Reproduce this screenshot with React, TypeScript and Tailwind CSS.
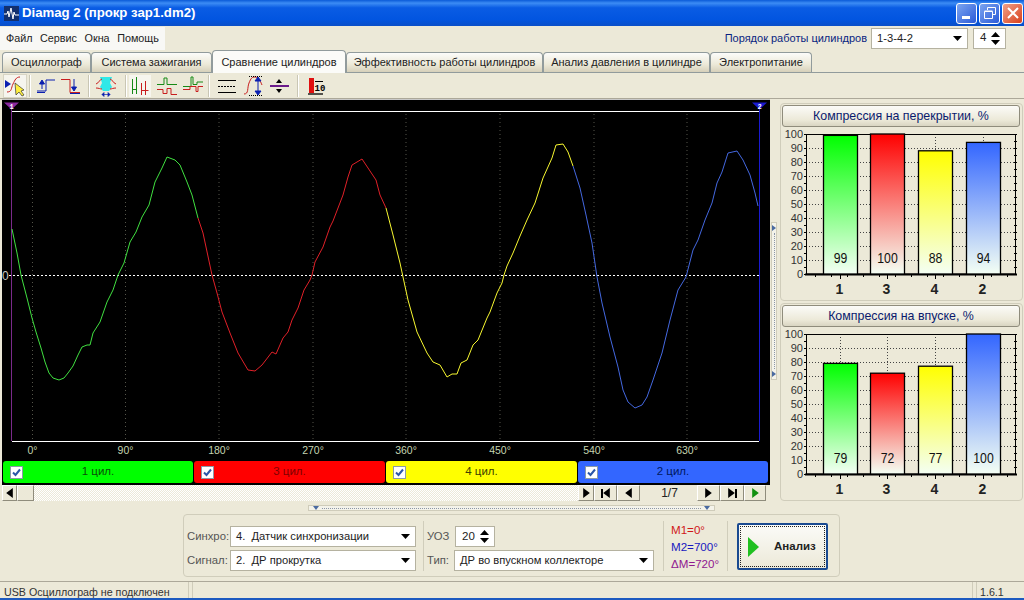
import React from 'react'

// Waveform traced from the oscillogram, split per cylinder
const GREEN = '12,229 17,253 21,275 27,298 32,318 36,332 41,348 45,362 49,373 53,378 59,380 64,378 68,373 73,366 78,355 82,347 87,345 90,345 93,333 100,322 107,302 113,290 118,275 124,263 130,242 136,232 142,217 149,205 155,182 162,168 167,157 175,160 180,165 187,182 192,195 198,218'
const RED = '198,218 203,233 212,275 217,293 222,312 230,333 238,353 248,370 255,371 262,365 272,352 276,354 283,338 288,332 292,320 298,308 304,290 310,280 312,275 315,262 323,247 330,227 333,221 343,195 348,177 352,165 357,162 362,159 368,168 376,180 380,195 386,208'
const YELLOW = '386,208 393,235 400,263 403,277 408,300 417,332 427,353 433,362 440,365 447,377 452,374 457,374 461,363 467,360 473,345 478,340 487,318 490,312 497,293 502,283 504,275 507,266 513,253 520,236 527,220 535,203 543,178 552,158 556,145 563,144 568,152 573,166'
const BLUE = '573,166 580,188 586,215 592,243 597,277 602,303 610,337 618,367 623,390 628,402 635,408 642,405 647,397 653,380 662,353 670,320 678,290 686,277 693,250 698,240 705,220 712,203 717,183 722,172 728,153 737,151 743,160 750,175 755,193 758,206'

const GRID_X = [32.5, 125.5, 219, 313, 406, 500, 594, 687]
const DEGREES = ['0°', '90°', '180°', '270°', '360°', '450°', '540°', '630°']

const TABS = [
  { label: 'Осциллограф', w: 'w-[89px]' },
  { label: 'Система зажигания', w: 'w-[121px]' },
  { label: 'Сравнение цилиндров', w: 'w-[134px]', active: true },
  { label: 'Эффективность работы цилиндров', w: 'w-[197px]' },
  { label: 'Анализ давления в цилиндре', w: 'w-[167px]' },
  { label: 'Электропитание', w: 'w-[102px]' },
]

const BAR_X = [823.5, 870.5, 918.5, 966.5]
const BAR_COLORS = ['#00ff00', '#ff0000', '#ffff00', '#3366ff']
const BAR_NAMES = ['1', '3', '4', '2']

const Caret = ({ className = '' }: { className?: string }) => (
  <svg width="9" height="5" viewBox="0 0 9 5" className={className}>
    <path d="M0 0h9L4.5 5z" fill="#000" />
  </svg>
)

const Combo = ({ text, w }: { text: string; w: string }) => (
  <div className={`${w} h-[21px] bg-white border border-[#b5b2a0] flex items-center justify-between pl-[5px] pr-[5px] text-[11.2px]`}>
    <span className="whitespace-pre">{text}</span>
    <Caret />
  </div>
)

const Spin = ({ value, w }: { value: string; w: string }) => (
  <div className={`${w} h-[21px] bg-white border border-[#b5b2a0] flex items-center justify-between pl-[6px] pr-[5px] text-[11.5px]`}>
    <span>{value}</span>
    <span className="flex flex-col gap-[3px]">
      <svg width="9" height="5" viewBox="0 0 9 5"><path d="M0 5h9L4.5 0z" fill="#000" /></svg>
      <Caret />
    </span>
  </div>
)

const Check = () => (
  <span className="w-[13px] h-[13px] bg-white border border-[#8a9aa8] flex items-center justify-center shrink-0">
    <svg width="9" height="9" viewBox="0 0 9 9">
      <path d="M1 4.5l2.500 2.500L8 1.500" stroke="#2a56a8" strokeWidth="2" fill="none" />
    </svg>
  </span>
)

const CylinderButton = ({ label, bg, fg, w }: { label: string; bg: string; fg: string; w: string }) => (
  <div className={`${w} h-[22px] ${bg} ${fg} rounded-[3px] flex items-center pl-[7px]`}>
    <Check />
    <span className="flex-1 text-center pr-[20px] text-[11.5px]">{label}</span>
  </div>
)

const NavButton = ({ w, children }: { w: string; children?: React.ReactNode }) => (
  <div className={`${w} h-[16px] bg-[#ece9d8] border-r border-b border-[#8f8c7c] border-t-white border-l-white border-t border-l flex items-center justify-center`}>
    {children}
  </div>
)

const Tri = ({ dir, color = '#000' }: { dir: 'l' | 'r'; color?: string }) => (
  <svg width="7" height="10" viewBox="0 0 6 9">
    <path d={dir === 'r' ? 'M0 0l6 4.5L0 9z' : 'M6 0L0 4.5 6 9z'} fill={color} />
  </svg>
)

const ToolSep = () => <span className="block w-[1px] h-[22px] bg-[#c9c6b4] border-r border-white box-content" />

// Toolbar pictures, all 22x22
const ToolIcon = ({ kind }: { kind: number }) => {
  const body: Record<number, React.ReactNode> = {
    1: (
      <>
        <path d="M1 5l6 4-6 4z" fill="#0a1fb0" />
        <path d="M3 17c5 0 4-4 6-8s3-7 7-7" stroke="#c81e1e" fill="none" />
        <path d="M11 8l1 12 3-3 3 4 2-1-3-4 3-1z" fill="#fff040" stroke="#333" strokeWidth="0.7" />
      </>
    ),
    2: (
      <>
        <path d="M2 16h9V5h9" stroke="#0a1fb0" fill="none" />
        <path d="M7 14V7M4.500 9L7 5l2.500 4z" stroke="#0a1fb0" fill="#0a1fb0" />
        <path d="M2 17.500h8" stroke="#0a1fb0" />
      </>
    ),
    3: (
      <>
        <path d="M1 4.500h9v13h10" stroke="#c81e1e" fill="none" />
        <path d="M14 4v10M11.500 12l2.500 4 2.500-4z" stroke="#0a1fb0" fill="#0a1fb0" />
        <path d="M10 18.500h10" stroke="#0a1fb0" />
      </>
    ),
    4: (
      <>
        <path d="M5 2h12l-2 6 2 4-3 4H8l-3-4 2-4z" fill="#30e8e8" />
        <path d="M1 9c3-1 4-5 6-5M21 9c-3-1-4-5-6-5M1 13c3 0 4 1 6 1M21 13c-3 0-4 1-6 1" stroke="#c81e1e" fill="none" />
        <path d="M7 19.500h8M7 19.500l2-2v4zM15 19.500l-2-2v4z" stroke="#0a1fb0" fill="#0a1fb0" strokeWidth="0.7" />
      </>
    ),
    5: (
      <>
        <path d="M3.500 4v15M3.500 14.500h4M7.500 2v17" stroke="#168a16" fill="none" />
        <path d="M12.500 8v12M12.500 15.500h4M16.500 6v14M16.500 15.500h3" stroke="#c81e1e" fill="none" />
      </>
    ),
    6: (
      <>
        <path d="M1 9.500h7V3h3v6.500h10" stroke="#168a16" fill="none" />
        <path d="M1 14.500h6v4h4v-5h4v6h6" stroke="#c81e1e" fill="none" />
      </>
    ),
    7: (
      <>
        <path d="M1 11.500h8V2h2v7.500h4V7h6" stroke="#168a16" fill="none" />
        <path d="M1 14.500h7v-3h6v5h2v-5h5" stroke="#c81e1e" fill="none" />
      </>
    ),
    8: (
      <>
        <path d="M2 5.500h18M2 17.500h18" stroke="#000" />
        <path d="M2 11.500h18" stroke="#000" strokeDasharray="2 1" />
      </>
    ),
    9: (
      <>
        <path d="M1 19c5 0 3-6 5-11s3-6 6-6 5 3 7 8" stroke="#c81e1e" fill="none" />
        <path d="M6 1.500h14M6 20.500h14" stroke="#000" strokeDasharray="1 1" />
        <path d="M15 5v12M12 6l3-4 3 4zM12 16l3 4 3-4z" stroke="#0a1fb0" fill="#0a1fb0" />
      </>
    ),
    10: (
      <>
        <path d="M1 11h19" stroke="#6a1a8a" strokeWidth="2" />
        <path d="M7 8h6l-3-4zM7 14h6l-3 4z" fill="#000" />
      </>
    ),
    11: (
      <>
        <rect x="3" y="3" width="5" height="15" fill="#e01010" />
        <path d="M2 19h15" stroke="#000" strokeWidth="1.300" />
        <path d="M9 6.500h8" stroke="#000" />
        <text x="8.500" y="16" fontSize="9" fontWeight="700" fontFamily="Liberation Mono, monospace" fill="#000">10</text>
      </>
    ),
  }
  return (
    <svg width="22" height="22" viewBox="0 0 22 22" className="block">
      {body[kind]}
    </svg>
  )
}

const BarChart = ({ id, title, values }: { id: string; title: string; values: number[] }) => {
  const minorY = Array.from({ length: 21 }, (_, i) => 134 + i * 7)
  const minorX = Array.from({ length: 13 }, (_, i) => 815 + i * 16)
  return (
    <div className="h-[198px] w-[243px] border border-[#d0cdbb] rounded-[4px] pt-[1px]">
      <div className="h-[22px] ml-[1px] w-[238px] rounded-[3px] border border-[#8f8c7c] bg-[linear-gradient(#fbfbf8,#ece9d8_70%,#d9d5c2)] flex items-center justify-center text-[#0a1a6e] text-[12.4px]">
        {title}
      </div>
      <svg width="240" height="170" viewBox="781 127 240 170" className="block">
        <defs>
          {BAR_COLORS.map((c, i) => (
            <linearGradient key={c} id={`${id}-${i}`} x1="0" y1="0" x2="0" y2="1">
              <stop offset="0" stopColor={c} />
              <stop offset="1" stopColor="#f4fff4" />
            </linearGradient>
          ))}
        </defs>
        {Array.from({ length: 11 }, (_, i) => (
          <React.Fragment key={i}>
            <line x1="806" x2="1016" y1={134.5 + i * 14} y2={134.5 + i * 14} stroke="#444" strokeDasharray="1 2" />
            <text x="803" y={138 + i * 14} textAnchor="end" fontSize="11" fill="#333" fontFamily="Liberation Sans, sans-serif">
              {100 - i * 10}
            </text>
          </React.Fragment>
        ))}
        {BAR_X.map(x => (
          <line key={x} x1={x + 17} x2={x + 17} y1="134" y2="274" stroke="#444" strokeDasharray="1 2" />
        ))}
        {minorY.map(y => (
          <React.Fragment key={y}>
            <line x1="804" x2="807" y1={y + 0.5} y2={y + 0.5} stroke="#000" />
            <line x1="1014" x2="1017" y1={y + 0.5} y2={y + 0.5} stroke="#000" />
          </React.Fragment>
        ))}
        {minorX.map(x => (
          <line key={x} x1={x + 0.5} x2={x + 0.5} y1="274" y2="277" stroke="#000" />
        ))}
        <path d="M806.500 134.500H1015.500V274H806.500Z" fill="none" stroke="#000" />
        <path d="M805 274.500H1017" stroke="#000" strokeWidth="2" />
        {values.map((v, i) => {
          const top = 274 - v * 1.4
          return (
            <React.Fragment key={i}>
              <rect x={BAR_X[i]} y={top} width="34" height={274 - top} fill={`url(#${id}-${i})`} stroke="#000" strokeWidth="1.300" />
              <text
                x={BAR_X[i] + 17}
                y="263"
                textAnchor="middle"
                fontSize="14"
                fill="#111"
                textLength={String(v).length * 6.8}
                lengthAdjust="spacingAndGlyphs"
                fontFamily="Liberation Sans, sans-serif"
              >
                {v}
              </text>
              <line x1={BAR_X[i] + 17} x2={BAR_X[i] + 17} y1="274" y2="279" stroke="#000" />
              <text x={BAR_X[i] + 16} y="294" textAnchor="middle" fontSize="14" fontWeight="700" fill="#222" fontFamily="Liberation Sans, sans-serif">
                {BAR_NAMES[i]}
              </text>
            </React.Fragment>
          )
        })}
      </svg>
    </div>
  )
}

export default function App() {
  return (
    <div className="w-[1024px] h-[600px] overflow-hidden flex flex-col bg-[#ece9d8] text-[11px] text-[#222] font-['Liberation_Sans',sans-serif]">
      {/* Title bar */}
      <div className="h-[26px] shrink-0 flex items-center pl-[4px] pr-[1px] bg-[linear-gradient(#0a5ad8,#3c8cf4_12%,#0a5ce4_30%,#0255e0_75%,#0a4fc8)]">
        <svg width="15" height="15" viewBox="0 0 15 15" className="mr-[3px]">
          <rect width="15" height="15" fill="#12306e" />
          <path d="M0 8h3l1-3 1 6 2-9 2 11 1-7 1 3h4" stroke="#fff" fill="none" />
        </svg>
        <span className="text-white font-bold text-[13.2px] whitespace-nowrap">Diamag 2 (прокр зар1.dm2)</span>
        <div className="ml-auto flex gap-[2px]">
          <div className="w-[21px] h-[21px] rounded-[3px] border border-white bg-[linear-gradient(135deg,#7ca5f0,#2a5ad8)] flex items-end justify-start pl-[5px] pb-[4px]">
            <span className="w-[8px] h-[3px] bg-white" />
          </div>
          <div className="w-[21px] h-[21px] rounded-[3px] border border-white bg-[linear-gradient(135deg,#7ca5f0,#2a5ad8)] flex items-center justify-center">
            <svg width="12" height="12" viewBox="0 0 12 12">
              <path d="M3.500 3V.5h8v7H9M.5 4.500h8v7h-8z M.5 4h8" stroke="#fff" fill="none" />
            </svg>
          </div>
          <div className="w-[21px] h-[21px] rounded-[3px] border border-white bg-[linear-gradient(135deg,#f0a088,#d8401c)] flex items-center justify-center">
            <svg width="12" height="12" viewBox="0 0 12 12">
              <path d="M1 1l10 10M11 1L1 11" stroke="#fff" strokeWidth="2" />
            </svg>
          </div>
        </div>
      </div>

      {/* Menu row */}
      <div className="h-[24px] shrink-0 flex items-center">
        <div className="w-[165px] h-[23px] bg-[#f8f8f5] flex items-center pl-[6px] gap-[7.5px] text-[10.8px] whitespace-nowrap">
          <span>Файл</span>
          <span>Сервис</span>
          <span>Окна</span>
          <span>Помощь</span>
        </div>
        <span className="ml-auto text-[#0a1f80] mr-[4px] whitespace-nowrap">Порядок работы цилиндров</span>
        <Combo text="1-3-4-2" w="w-[97px]" />
        <div className="ml-[5px] mr-[18px]">
          <Spin value="4" w="w-[33px]" />
        </div>
      </div>

      {/* Tabs */}
      <div className="h-[23px] shrink-0 flex items-end pl-[2px] border-b border-[#919b9c]">
        {TABS.map(t => (
          <div
            key={t.label}
            className={`${t.w} flex items-center justify-center rounded-t-[4px] border border-b-0 border-[#919b9c] whitespace-nowrap ${
              t.active ? 'h-[23px] bg-[#fbfbf8] -mb-[1px] relative' : 'h-[20px] bg-[linear-gradient(#fcfcfa,#ece9d8_60%,#d6d0ba)]'
            }`}
          >
            {t.label}
          </div>
        ))}
      </div>

      {/* Toolbar */}
      <div className="h-[26px] shrink-0 flex items-center border-b border-[#aca899] pl-[3px]">
        <span className="bg-[#f6f5ee] border border-[#d8d5c4] w-[24px] h-[24px] flex items-center justify-center"><ToolIcon kind={1} /></span>
        <span className="ml-[2px]"><ToolSep /></span>
        <span className="ml-[4px]"><ToolIcon kind={2} /></span>
        <span className="ml-[3px]"><ToolIcon kind={3} /></span>
        <span className="ml-[6px]"><ToolSep /></span>
        <span className="ml-[5px]"><ToolIcon kind={4} /></span>
        <span className="ml-[8px]"><ToolSep /></span>
        <span className="ml-[2px] bg-[#f6f5ee]"><ToolIcon kind={5} /></span>
        <span className="ml-[5px]"><ToolIcon kind={6} /></span>
        <span className="ml-[4px]"><ToolIcon kind={7} /></span>
        <span className="ml-[4px]"><ToolSep /></span>
        <span className="ml-[6px]"><ToolIcon kind={8} /></span>
        <span className="ml-[5px]"><ToolIcon kind={9} /></span>
        <span className="ml-[4px]"><ToolIcon kind={10} /></span>
        <span className="ml-[6px]"><ToolSep /></span>
        <span className="ml-[7px]"><ToolIcon kind={11} /></span>
      </div>

      {/* Main area */}
      <div className="h-[406px] shrink-0 flex">
        <div className="ml-[2px] w-[768px] flex flex-col">
          <svg width="768" height="361" viewBox="2 99 768 361" className="block bg-black">
            <line x1="2" x2="770" y1="99.500" y2="99.500" stroke="#c8c8c8" />
            {GRID_X.map(x => (
              <line key={x} x1={x} x2={x} y1="114" y2="441" stroke="#55554a" strokeDasharray="1 3" />
            ))}
            <line x1="12" x2="759" y1="111.500" y2="111.500" stroke="#fff" />
            <line x1="12" x2="759" y1="441.500" y2="441.500" stroke="#fff" />
            <line x1="11.500" x2="11.500" y1="103" y2="441" stroke="#7a2a8a" />
            <line x1="759.500" x2="759.500" y1="103" y2="441" stroke="#1a1ad0" />
            <path d="M4 102.500h15l-7.500 7z" fill="#8a2aa0" />
            <path d="M752 102.500h15l-7.500 7z" fill="#1a1ad0" />
            <text x="11.500" y="109" fontSize="7" fontWeight="700" textAnchor="middle" fill="#fff" fontFamily="Liberation Mono, monospace">1</text>
            <text x="759.500" y="109" fontSize="7" fontWeight="700" textAnchor="middle" fill="#fff" fontFamily="Liberation Mono, monospace">2</text>
            <line x1="9" x2="759" y1="275.500" y2="275.500" stroke="#fff" strokeDasharray="2 2" />
            <text x="2" y="279.500" fontSize="12" fill="#c8c8c0" fontFamily="Liberation Sans, sans-serif">0</text>
            <polyline points={GREEN} fill="none" stroke="#40e040" />
            <polyline points={RED} fill="none" stroke="#e02028" />
            <polyline points={YELLOW} fill="none" stroke="#f8f830" />
            <polyline points={BLUE} fill="none" stroke="#4468e0" />
            {GRID_X.map((x, i) => (
              <text key={x} x={x} y="454" fontSize="10.500" textAnchor="middle" fill="#c4d4b0" fontFamily="Liberation Sans, sans-serif">
                {DEGREES[i]}
              </text>
            ))}
          </svg>
          <div className="h-[25px] bg-black flex items-start gap-[1px] pt-[1px] pl-[1px]">
            <CylinderButton label="1 цил." bg="bg-[#00ff00]" fg="text-[#085008]" w="w-[190px]" />
            <CylinderButton label="3 цил." bg="bg-[#ff0000]" fg="text-[#800000]" w="w-[191px]" />
            <CylinderButton label="4 цил." bg="bg-[#ffff00]" fg="text-[#404000]" w="w-[191px]" />
            <CylinderButton label="2 цил." bg="bg-[#3366ff]" fg="text-[#001860]" w="w-[190px]" />
          </div>
          <div className="h-[16px] flex">
            <NavButton w="w-[15px]"><Tri dir="l" /></NavButton>
            <NavButton w="w-[17px]" />
            <div className="w-[544px] bg-[repeating-conic-gradient(#fff_0_25%,#ece9d8_0_50%)] bg-[length:2px_2px]" />
            <NavButton w="w-[16px]"><Tri dir="r" /></NavButton>
            <NavButton w="w-[23px]">
              <span className="w-[2px] h-[9px] bg-black" /><Tri dir="l" />
            </NavButton>
            <NavButton w="w-[23px]"><Tri dir="l" /></NavButton>
            <div className="w-[57px] flex items-center justify-center text-[12px] pl-[2px]">1/7</div>
            <NavButton w="w-[23px]"><Tri dir="r" /></NavButton>
            <NavButton w="w-[24px]">
              <Tri dir="r" /><span className="w-[2px] h-[9px] bg-black" />
            </NavButton>
            <NavButton w="w-[22px]"><Tri dir="r" color="#109010" /></NavButton>
          </div>
        </div>

        {/* Vertical splitter */}
        <div className="w-[10px] flex justify-start pl-[1px] pt-[123px]">
          <div className="w-[6px] h-[158px] bg-[#f4f3ea] border border-[#cfccba] flex flex-col items-center justify-between py-[2px]">
            <svg width="4" height="6" viewBox="0 0 4 6"><path d="M0 0l4 3-4 3z" fill="#4a6aa0" /></svg>
            <span className="flex-1 my-[2px] border-l border-dotted border-[#8c96a8]" />
            <svg width="4" height="6" viewBox="0 0 4 6"><path d="M0 0l4 3-4 3z" fill="#4a6aa0" /></svg>
          </div>
        </div>

        <div className="flex flex-col gap-[2px] pt-[4px]">
          <BarChart id="overlap" title="Компрессия на перекрытии, %" values={[99, 100, 88, 94]} />
          <BarChart id="intake" title="Компрессия на впуске, %" values={[79, 72, 77, 100]} />
        </div>
      </div>

      {/* Horizontal splitter */}
      <div className="h-[9px] shrink-0 pl-[308px]">
        <div className="w-[407px] h-[6px] bg-[#f4f3ea] border border-[#cfccba] flex items-center justify-between px-[4px]">
          <svg width="6" height="4" viewBox="0 0 6 4"><path d="M0 0h6L3 4z" fill="#4a6aa0" /></svg>
          <span className="flex-1 mx-[3px] border-t border-dotted border-[#8c96a8]" />
          <svg width="6" height="4" viewBox="0 0 6 4"><path d="M0 0h6L3 4z" fill="#4a6aa0" /></svg>
        </div>
      </div>

      {/* Bottom controls */}
      <div className="h-[64px] shrink-0 pl-[183px]">
        <div className="w-[657px] h-[63px] border border-[#d0cdbb] rounded-[4px] flex items-center pl-[3px]">
          <div className="mt-[6px] w-[39px] flex flex-col gap-[3px] text-[#555] text-[11.3px]">
            <span className="h-[21px] leading-[21px]">Синхро:</span>
            <span className="h-[21px] leading-[21px]">Сигнал:</span>
          </div>
          <div className="mt-[6px] ml-[4px] flex flex-col gap-[3px]">
            <Combo text="4.  Датчик синхронизации" w="w-[186px]" />
            <Combo text="2.  ДР прокрутка" w="w-[186px]" />
          </div>
          <span className="ml-[7px] w-[1px] h-[50px] bg-[#d0cdbb]" />
          <div className="mt-[6px] ml-[3px] w-[27px] flex flex-col gap-[3px] text-[#555] text-[11.3px]">
            <span className="h-[21px] leading-[21px]">УОЗ</span>
            <span className="h-[21px] leading-[21px]">Тип:</span>
          </div>
          <div className="mt-[6px] flex flex-col gap-[3px]">
            <div className="pl-[1px]"><Spin value="20" w="w-[40px]" /></div>
            <Combo text="ДР во впускном коллекторе" w="w-[200px]" />
          </div>
          <span className="ml-[9px] w-[1px] h-[50px] bg-[#d0cdbb]" />
          <div className="mt-[2px] ml-[7px] w-[56px] flex flex-col text-[11.6px] leading-[17px] whitespace-nowrap">
            <span className="text-[#d01818]">M1=0°</span>
            <span className="text-[#1818c0]">M2=700°</span>
            <span className="text-[#901890]">ΔM=720°</span>
          </div>
          <span className="w-[1px] h-[50px] bg-[#d0cdbb]" />
          <div className="mt-[2px] ml-[9px] w-[91px] h-[47px] rounded-[2px] border-2 border-[#1a4a90] bg-[linear-gradient(#fbfbf8,#ece9d8)] p-[1px]">
            <div className="h-full border border-dotted border-[#222] flex items-center pl-[7px]">
              <svg width="11" height="20" viewBox="0 0 11 20"><path d="M0 0l11 10L0 20z" fill="#20c020" /></svg>
              <span className="ml-[15px] font-bold text-[11.5px]">Анализ</span>
            </div>
          </div>
        </div>
      </div>

      {/* Status bar */}
      <div className="h-[17px] mt-[3px] shrink-0 flex items-center border-t border-[#aca899] pl-[1px] text-[#333] gap-[3px] text-[10.7px]">
        <span className="w-[188px] h-full pl-[3px] pt-[2px] border-r border-[#cfccba] whitespace-nowrap">USB Осциллограф не подключен</span>
        <span className="w-[781px] h-full border-x border-[#cfccba]" />
        <span className="w-[44px] h-full pl-[3px] pt-[2px] border-l border-[#cfccba]">1.6.1</span>
      </div>
      <div className="flex-1 bg-[#1c5ac0]" />
    </div>
  )
}
